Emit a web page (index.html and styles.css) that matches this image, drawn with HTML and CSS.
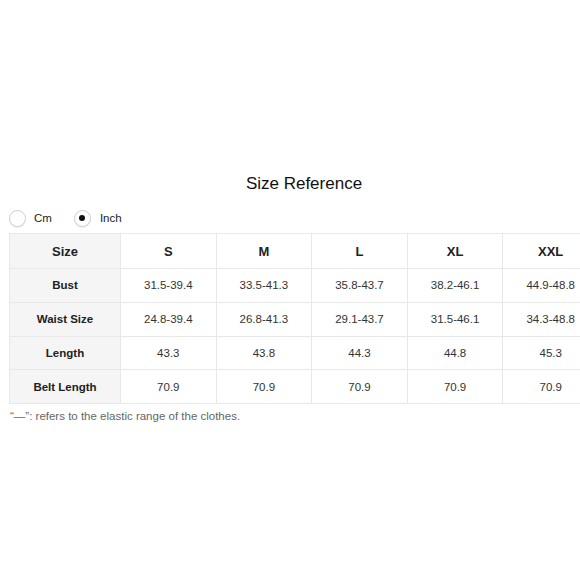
FILE: index.html
```html
<!DOCTYPE html>
<html>
<head>
<meta charset="utf-8">
<link rel="stylesheet" href="styles.css">
</head>
<body>
<div class="page">
  <h2 class="title">Size Reference</h2>
  <div class="units">
    <label class="unit"><span class="radio"></span><span class="unit-label">Cm</span></label>
    <label class="unit"><span class="radio checked"></span><span class="unit-label">Inch</span></label>
  </div>
  <table class="sizes">
    <colgroup><col class="c-first"><col><col><col><col><col></colgroup>
    <tr class="head"><th>Size</th><th>S</th><th>M</th><th>L</th><th>XL</th><th>XXL</th></tr>
    <tr><th>Bust</th><td>31.5-39.4</td><td>33.5-41.3</td><td>35.8-43.7</td><td>38.2-46.1</td><td>44.9-48.8</td></tr>
    <tr><th>Waist Size</th><td>24.8-39.4</td><td>26.8-41.3</td><td>29.1-43.7</td><td>31.5-46.1</td><td>34.3-48.8</td></tr>
    <tr><th>Length</th><td>43.3</td><td>43.8</td><td>44.3</td><td>44.8</td><td>45.3</td></tr>
    <tr><th>Belt Length</th><td>70.9</td><td>70.9</td><td>70.9</td><td>70.9</td><td>70.9</td></tr>
  </table>
  <p class="note">“—”: refers to the elastic range of the clothes.</p>
</div>
</body>
</html>
```
FILE: styles.css
```css
html, body {
  margin: 0;
  padding: 0;
  overflow: hidden;
  background: #fff;
}
body {
  font-family: "Liberation Sans", Arial, sans-serif;
  color: #222;
  width: 580px;
  height: 580px;
}
.page {
  padding-left: 9px;
  padding-top: 174px;
  width: 590px;
}
.title {
  margin: 0;
  font-size: 17px;
  font-weight: normal;
  line-height: 20px;
  text-align: center;
  color: #111;
}
.units {
  display: flex;
  align-items: center;
  gap: 22px;
  margin-top: 15px;
  height: 18px;
}
.unit {
  display: flex;
  align-items: center;
  gap: 8px;
  font-size: 11.5px;
  color: #222;
}
.unit + .unit {
  gap: 9px;
}
.radio {
  box-sizing: border-box;
  width: 17px;
  height: 17px;
  border-radius: 50%;
  border: 1px solid #cfcfcf;
  box-shadow: 0 1px 1px rgba(0,0,0,0.08);
  background: #fff;
  display: flex;
  align-items: center;
  justify-content: center;
}
.radio.checked::after {
  content: "";
  width: 6px;
  height: 6px;
  border-radius: 50%;
  background: #111;
}
.sizes {
  margin-top: 6px;
  border-collapse: collapse;
  table-layout: fixed;
  width: 590px;
  font-size: 11.5px;
}
.c-first {
  width: 111px;
}
.sizes th, .sizes td {
  border: 1.5px solid #e8e8e8;
  height: 32.8px;
  padding: 0;
  text-align: center;
  white-space: nowrap;
}
.sizes tr.head th {
  height: 34px;
  font-size: 13px;
}
.sizes th {
  font-weight: bold;
  color: #222;
}
.sizes tr th:first-child {
  background: #f5f5f5;
}
.sizes tr:not(.head) th:first-child {
  font-size: 11.5px;
}
.sizes td {
  color: #333;
}
.note {
  margin: 6px 0 0 1px;
  font-size: 11.5px;
  color: #666;
}
```
